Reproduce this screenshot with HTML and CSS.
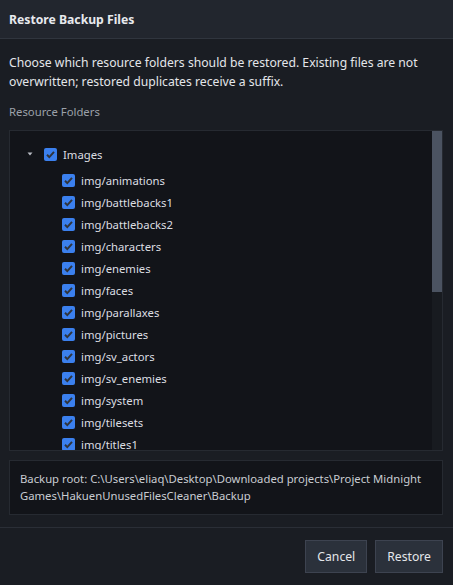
FILE: index.html
```html
<!DOCTYPE html>
<html>
<head>
<meta charset="utf-8">
<link rel="stylesheet" href="styles.css">
</head>
<body>
<div class="dialog">
  <div class="header">Restore Backup Files</div>
  <div class="body">
    <p class="desc">Choose which resource folders should be restored. Existing files are not overwritten; restored duplicates receive a suffix.</p>
    <div class="label">Resource Folders</div>
    <div class="tree">
      <div class="tree-scroll">
        <div class="row parent">
          <svg class="arrow" width="8" height="8" viewBox="0 0 8 8"><path d="M1.5 2.5 L6.5 2.5 L4 5.5 Z" fill="#b8bcc4"/></svg>
          <span class="cb"><svg viewBox="0 0 13 13" width="13" height="13"><path d="M3 6.8 L5.3 9.1 L10 3.9" fill="none" stroke="#30343b" stroke-width="2"/></svg></span>
          <span class="name">Images</span>
        </div>
        <div class="children">
          <div class="row"><span class="cb"><svg viewBox="0 0 13 13" width="13" height="13"><path d="M3 6.8 L5.3 9.1 L10 3.9" fill="none" stroke="#30343b" stroke-width="2"/></svg></span><span class="name">img/animations</span></div>
          <div class="row"><span class="cb"><svg viewBox="0 0 13 13" width="13" height="13"><path d="M3 6.8 L5.3 9.1 L10 3.9" fill="none" stroke="#30343b" stroke-width="2"/></svg></span><span class="name">img/battlebacks1</span></div>
          <div class="row"><span class="cb"><svg viewBox="0 0 13 13" width="13" height="13"><path d="M3 6.8 L5.3 9.1 L10 3.9" fill="none" stroke="#30343b" stroke-width="2"/></svg></span><span class="name">img/battlebacks2</span></div>
          <div class="row"><span class="cb"><svg viewBox="0 0 13 13" width="13" height="13"><path d="M3 6.8 L5.3 9.1 L10 3.9" fill="none" stroke="#30343b" stroke-width="2"/></svg></span><span class="name">img/characters</span></div>
          <div class="row"><span class="cb"><svg viewBox="0 0 13 13" width="13" height="13"><path d="M3 6.8 L5.3 9.1 L10 3.9" fill="none" stroke="#30343b" stroke-width="2"/></svg></span><span class="name">img/enemies</span></div>
          <div class="row"><span class="cb"><svg viewBox="0 0 13 13" width="13" height="13"><path d="M3 6.8 L5.3 9.1 L10 3.9" fill="none" stroke="#30343b" stroke-width="2"/></svg></span><span class="name">img/faces</span></div>
          <div class="row"><span class="cb"><svg viewBox="0 0 13 13" width="13" height="13"><path d="M3 6.8 L5.3 9.1 L10 3.9" fill="none" stroke="#30343b" stroke-width="2"/></svg></span><span class="name">img/parallaxes</span></div>
          <div class="row"><span class="cb"><svg viewBox="0 0 13 13" width="13" height="13"><path d="M3 6.8 L5.3 9.1 L10 3.9" fill="none" stroke="#30343b" stroke-width="2"/></svg></span><span class="name">img/pictures</span></div>
          <div class="row"><span class="cb"><svg viewBox="0 0 13 13" width="13" height="13"><path d="M3 6.8 L5.3 9.1 L10 3.9" fill="none" stroke="#30343b" stroke-width="2"/></svg></span><span class="name">img/sv_actors</span></div>
          <div class="row"><span class="cb"><svg viewBox="0 0 13 13" width="13" height="13"><path d="M3 6.8 L5.3 9.1 L10 3.9" fill="none" stroke="#30343b" stroke-width="2"/></svg></span><span class="name">img/sv_enemies</span></div>
          <div class="row"><span class="cb"><svg viewBox="0 0 13 13" width="13" height="13"><path d="M3 6.8 L5.3 9.1 L10 3.9" fill="none" stroke="#30343b" stroke-width="2"/></svg></span><span class="name">img/system</span></div>
          <div class="row"><span class="cb"><svg viewBox="0 0 13 13" width="13" height="13"><path d="M3 6.8 L5.3 9.1 L10 3.9" fill="none" stroke="#30343b" stroke-width="2"/></svg></span><span class="name">img/tilesets</span></div>
          <div class="row"><span class="cb"><svg viewBox="0 0 13 13" width="13" height="13"><path d="M3 6.8 L5.3 9.1 L10 3.9" fill="none" stroke="#30343b" stroke-width="2"/></svg></span><span class="name">img/titles1</span></div>
        </div>
      </div>
      <div class="scrollbar"><div class="thumb"></div></div>
    </div>
    <div class="root">Backup root: C:\Users\eliaq\Desktop\Downloaded projects\Project Midnight Games\HakuenUnusedFilesCleaner\Backup</div>
  </div>
  <div class="footer">
    <button class="btn">Cancel</button>
    <button class="btn">Restore</button>
  </div>
</div>
</body>
</html>
```
FILE: styles.css
```css
html, body {
  margin: 0;
  padding: 0;
  background: #1a1d23;
}
body {
  font-family: "Noto Sans", "Open Sans", sans-serif;
  color: #e4e6ea;
  width: 453px;
  height: 585px;
  overflow: hidden;
}
.dialog {
  display: flex;
  flex-direction: column;
  height: 585px;
}
.header {
  height: 39px;
  flex: none;
  box-sizing: border-box;
  background: #22262e;
  border-bottom: 1px solid #30353e;
  padding: 0 9px;
  display: flex;
  align-items: center;
  font-weight: 700;
  font-size: 12.2px;
  color: #e8eaee;
}
.body {
  padding: 0 10px 0 9px;
  background: #1a1d23;
}
.desc {
  margin: 14px 0 0;
  font-size: 12.2px;
  line-height: 19px;
  color: #e4e6ea;
}
.label {
  margin-top: 13px;
  font-size: 11.3px;
  line-height: 16px;
  color: #9ca1a9;
}
.tree {
  margin-top: 10px;
  height: 321px;
  box-sizing: border-box;
  border: 1px solid #262a31;
  background: #121419;
  display: flex;
  overflow: hidden;
}
.tree-scroll {
  flex: 1;
  padding: 12px 0 0 16px;
  overflow: hidden;
}
.scrollbar {
  width: 10px;
  background: #181b20;
}
.thumb {
  height: 161px;
  background: #4b5361;
}
.row {
  display: flex;
  align-items: center;
  height: 22px;
  font-size: 11.3px;
  color: #dcdee2;
}
.row.parent {
  margin-bottom: 4px;
}
.arrow {
  flex: none;
  margin-right: 10px;
}
.children {
  padding-left: 36px;
}
.cb {
  flex: none;
  width: 13px;
  height: 13px;
  border-radius: 2px;
  background: #3b80ee;
  display: inline-flex;
  margin-right: 6px;
}
.root {
  margin-top: 9px;
  box-sizing: border-box;
  height: 55px;
  border: 1px solid #262a31;
  background: #121419;
  padding: 9px 10px;
  font-size: 11.3px;
  line-height: 17px;
  color: #c9ccd2;
}
.footer {
  margin-top: 12px;
  border-top: 1px solid #2a2e36;
  flex: 1;
  display: flex;
  justify-content: flex-end;
  align-items: flex-start;
  gap: 8px;
  padding: 12px 10px 0 0;
  background: #1a1d23;
}
.btn {
  height: 33px;
  box-sizing: border-box;
  padding: 0 11px;
  background: #2b313b;
  border: 1px solid #3d4350;
  color: #e4e6ea;
  font-family: "Noto Sans", "Open Sans", sans-serif;
  font-size: 12.2px;
}
```
